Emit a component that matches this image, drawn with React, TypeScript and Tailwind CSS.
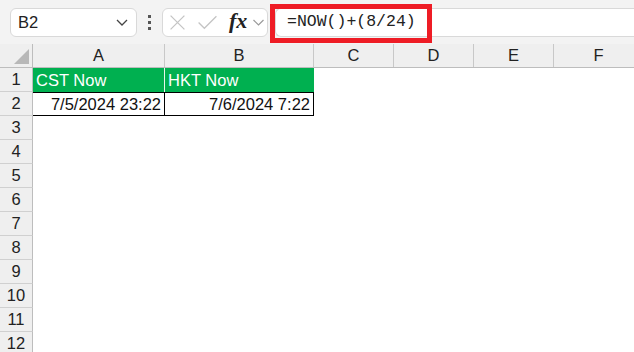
import React from "react";

const cols = [
  { l: "A", w: "w-[132px]" },
  { l: "B", w: "w-[149px]" },
  { l: "C", w: "w-[80px]" },
  { l: "D", w: "w-[80px]" },
  { l: "E", w: "w-[80px]" },
  { l: "F", w: "w-[90px]" },
];

const rows = [3, 4, 5, 6, 7, 8, 9, 10, 11, 12];

function RowHead({ n }: { n: number }) {
  return (
    <div className="w-[33px] shrink-0 h-full bg-[#efefef] border-r border-[#bdbdbd] border-b border-b-[#d0d0d0] flex items-center justify-center text-[16.5px] text-[#222]">
      {n}
    </div>
  );
}

export default function App() {
  return (
    <div className="w-[634px] h-[352px] overflow-hidden bg-white text-[#111]" style={{ fontFamily: '"Liberation Sans", Arial, sans-serif' }}>
      {/* toolbar */}
      <div className="h-[44px] bg-[#f3f3f3] flex items-center relative">
        <div className="ml-[10px] w-[127px] h-[29px] rounded-md border border-[#d9d9d9] bg-white flex items-center justify-between pl-[7px] pr-[6px]">
          <span className="text-[16.5px] text-[#222]">B2</span>
          <svg width="14" height="10" viewBox="0 0 14 10" className="mr-[1px]">
            <path d="M2 3 L7 8 L12 3" stroke="#444" strokeWidth="1.3" fill="none" />
          </svg>
        </div>
        <div className="w-[25px] flex flex-col items-center gap-[3px]">
          <div className="w-[3px] h-[3px] bg-[#555]" />
          <div className="w-[3px] h-[3px] bg-[#555]" />
          <div className="w-[3px] h-[3px] bg-[#555]" />
        </div>
        <div className="w-[106px] h-[29px] rounded-md border border-[#d9d9d9] bg-white flex items-center pl-[6px]">
          <svg width="17" height="17" viewBox="0 0 16 16">
            <path d="M1.5 1.5 L14.5 14.5 M14.5 1.5 L1.5 14.5" stroke="#c4c4c4" strokeWidth="1.2" />
          </svg>
          <svg width="21" height="17" viewBox="0 0 20 16" className="ml-[11px]">
            <path d="M1.5 8 L7 13.5 L18.5 2" stroke="#c4c4c4" strokeWidth="1.2" fill="none" />
          </svg>
          <span className="ml-[11px] italic font-bold text-[22px] text-[#222] leading-none -mt-[2px]" style={{ fontFamily: '"Liberation Serif", serif' }}>fx</span>
          <svg width="13" height="8" viewBox="0 0 12 8" className="ml-[5px]">
            <path d="M1 2 L6 7 L11 2" stroke="#999" strokeWidth="1.2" fill="none" />
          </svg>
        </div>
        <div className="ml-[7px] flex-1 h-[29px] rounded-l-md border border-[#d9d9d9] border-r-0 bg-white flex items-center pl-[11px]">
          <span className="text-[16.5px] text-[#222]" style={{ fontFamily: '"Liberation Mono", monospace' }}>=NOW()+(8/24)</span>
        </div>
        <div className="absolute left-[270px] top-[4px] w-[162px] h-[39px] border-[5px] border-[#ee1c25]" />
      </div>

      {/* column header */}
      <div className="h-[24px] flex bg-[#efefef] border-b border-[#bdbdbd]">
        <div className="w-[33px] shrink-0 border-r border-[#bdbdbd] relative">
          <svg width="33" height="23" viewBox="0 0 33 23" className="absolute inset-0">
            <polygon points="29,5 29,20 14,20" fill="#b8b8b8" />
          </svg>
        </div>
        {cols.map((c) => (
          <div key={c.l} className={`${c.w} shrink-0 border-r border-[#c8c8c8] flex items-center justify-center text-[16.5px] text-[#222]`}>
            {c.l}
          </div>
        ))}
      </div>

      {/* row 1 */}
      <div className="h-[24px] flex">
        <RowHead n={1} />
        <div className="w-[132px] shrink-0 bg-[#00b050] text-white text-[16.5px] flex items-center pl-[3px] border-r border-[#e6f5ec]">CST Now</div>
        <div className="w-[149px] shrink-0 bg-[#00b050] text-white text-[16.5px] flex items-center pl-[3px]">HKT Now</div>
      </div>
      {/* row 2 */}
      <div className="h-[24px] flex">
        <RowHead n={2} />
        <div className="w-[132px] shrink-0 border border-black border-l-0 flex items-center justify-end pr-[3px] text-[16.5px]">7/5/2024 23:22</div>
        <div className="w-[150px] shrink-0 border border-black border-l-0 -ml-[1px] flex items-center justify-end pr-[3px] text-[16.5px]">7/6/2024 7:22</div>
      </div>
      {rows.map((n) => (
        <div key={n} className="h-[24px] flex">
          <RowHead n={n} />
        </div>
      ))}
    </div>
  );
}
